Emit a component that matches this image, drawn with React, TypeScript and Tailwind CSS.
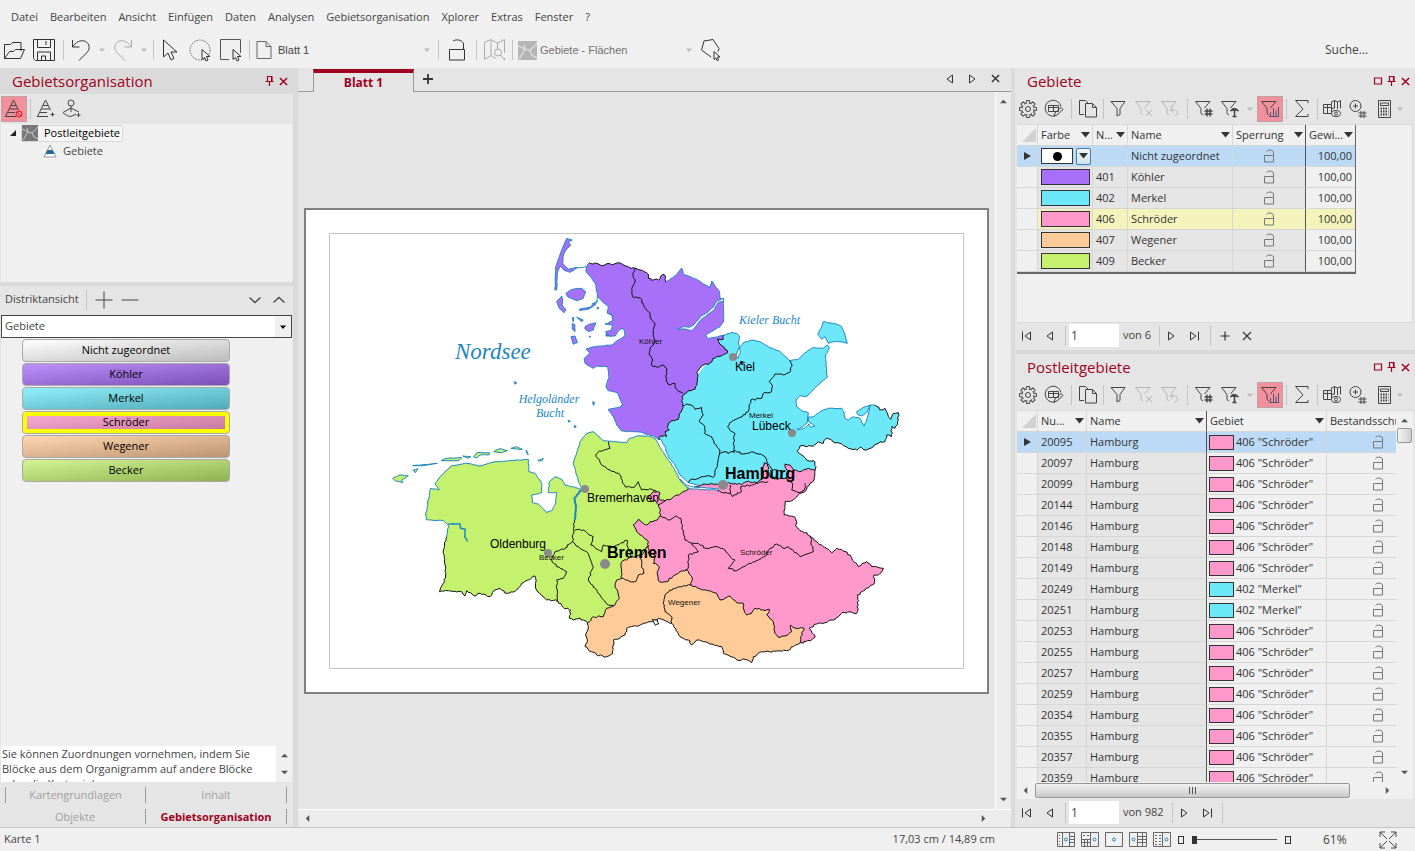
import React from "react";

type Kind = "coast" | "border" | "hidden";
type Pt = [number, number];
type Arc = [Kind, string];

const menu = ["Datei", "Bearbeiten", "Ansicht", "Einfügen", "Daten", "Analysen", "Gebietsorganisation", "Xplorer", "Extras", "Fenster", "?"];

const districts = [
  { name: "Nicht zugeordnet", cls: "bg-linear-to-br from-white to-[#bcbcbc]" },
  { name: "Köhler", cls: "bg-linear-to-br from-[#bd90fa] to-[#7c50b8]" },
  { name: "Merkel", cls: "bg-linear-to-br from-[#92effa] to-[#50aab8]" },
  { name: "Schröder", cls: "bg-linear-to-br from-[#ffb0d8] to-[#c0739a] outline-4 -outline-offset-5 outline-[#ffff00]" },
  { name: "Wegener", cls: "bg-linear-to-br from-[#ffd8b2] to-[#bd9470]" },
  { name: "Becker", cls: "bg-linear-to-br from-[#d3f592] to-[#90b352]" },
];

const areas = [
  { no: "", name: "Nicht zugeordnet", color: "", row: "bg-[#bcdaf5]" },
  { no: "401", name: "Köhler", color: "bg-[#a870f8]", row: "" },
  { no: "402", name: "Merkel", color: "bg-[#6ce8f8]", row: "" },
  { no: "406", name: "Schröder", color: "bg-[#ff99cc]", row: "bg-[#f3f3bb]" },
  { no: "407", name: "Wegener", color: "bg-[#ffcc99]", row: "" },
  { no: "409", name: "Becker", color: "bg-[#c4f26e]", row: "" },
];

const postcodes = [
  "20095", "20097", "20099", "20144", "20146", "20148", "20149", "20249", "20251",
  "20253", "20255", "20257", "20259", "20354", "20355", "20357", "20359",
];
const merkelCodes = ["20249", "20251"];

/* ---------- icons ---------- */

function Icon({ children, size = 20, className = "" }: { children: React.ReactNode; size?: number; className?: string }) {
  return (
    <svg width={size} height={size} viewBox={`0 0 ${size} ${size}`} fill="none" stroke="currentColor" className={`shrink-0 ${className}`} aria-hidden="true">
      {children}
    </svg>
  );
}

function Caret({ className = "text-[#bbb]", size = 7 }: { className?: string; size?: number }) {
  return (
    <svg width={size} height={size} viewBox="0 0 8 8" fill="currentColor" className={`shrink-0 ${className}`} aria-hidden="true">
      <path d="M0 2h8L4 6.5z" />
    </svg>
  );
}

function HeadCaret() {
  return (
    <svg width="9" height="6" viewBox="0 0 9 6" fill="#333" className="shrink-0" aria-hidden="true">
      <path d="M0 0h9L4.5 5.5z" />
    </svg>
  );
}

function OpenIcon() {
  return (
    <Icon size={22} className="text-[#333]">
      <path d="M1.5 19.5V5.5h6l2-2h8.500v8.500M1.500 19.500l5-7h4l2-2h9l-4 9z" />
    </Icon>
  );
}

function SaveIcon() {
  return (
    <Icon size={22} className="text-[#333]">
      <path d="M.5.5h21v21h-19l-2-2zM4.500.500v8h13v-8M4.500 21v-8h13v8M8.500 21v-4h4v4M13 2v4" />
    </Icon>
  );
}

function UndoIcon({ flip = false }: { flip?: boolean }) {
  return (
    <Icon size={22} className={flip ? "-scale-x-100 text-[#aaa]" : "text-[#333]"}>
      <path d="M1.500 1v7h7M2 7.500C6 1 13 .5 16 3.500s3 7-.5 10.500L8 21.500" />
    </Icon>
  );
}

function CursorIcon() {
  return (
    <Icon size={22} className="text-[#333]">
      <path d="M4.500 1v17l4.500-4 3 7 3-1.500-3-6.500h6z" />
    </Icon>
  );
}

function SmallCursor() {
  return <path d="M13 10.500v10l2.500-2 1.500 3.500 2-1-1.500-3.500h3.500z" fill="#f0f0f0" stroke="#333" />;
}

function CircleSelectIcon() {
  return (
    <Icon size={23}>
      <circle cx="11" cy="11" r="10" stroke="#555" strokeDasharray="1.500 1.200" />
      <SmallCursor />
    </Icon>
  );
}

function RectSelectIcon() {
  return (
    <Icon size={23}>
      <path d="M9 20.500H.5V.5h20V14" stroke="#555" />
      <SmallCursor />
    </Icon>
  );
}

function PageIcon() {
  return (
    <Icon size={18} className="text-[#666]">
      <path d="M2 .5h9l5 5v12H2zM11 .5v5h5" />
    </Icon>
  );
}

function LockIcon({ small = false }: { small?: boolean }) {
  if (small) {
    return (
      <Icon size={14} className="mx-auto block text-[#777]">
        <path d="M2.500 6.500h9v6.500h-9zM4.500 2.500c1-2 6-2 7 .500v3.500" />
      </Icon>
    );
  }
  return (
    <Icon size={22} className="text-[#333]">
      <path d="M3.500 10.500h15v10.500h-15zM7 2c3-2 9.500-1.500 10.500 3v5" />
    </Icon>
  );
}

function MapSearchIcon() {
  return (
    <Icon size={22} className="text-[#aaa]">
      <path d="M.5 20V3.500l6-3 7 3.500 7-3.500V14M.5 20.500l6.500-4 5 3M7 .5v16M13.500 4v6M20.500 19v2" />
      <circle cx="14" cy="13.500" r="3.500" />
      <path d="m16.500 16 4 5" />
    </Icon>
  );
}

function RegionIcon({ size = 16, faint = false }: { size?: number; faint?: boolean }) {
  return (
    <svg width={size} height={size} viewBox="0 0 16 16" className="shrink-0" aria-hidden="true">
      <rect width="16" height="16" fill={faint ? "#b5b5b5" : "#777"} />
      <path d="m0 4 6 3 4 1 6-6M6 7 1 15M10 8l2 4 4 2M6 7 5 3" stroke={faint ? "#e2e2e2" : "#ccc"} fill="none" />
    </svg>
  );
}

function PolygonIcon() {
  return (
    <Icon size={22} className="text-[#333]">
      <path d="m4 2 9-1.500 6 9-1 3M11 18l-9.500-7L4 2" />
      <path d="M14 12.500v8l2-1.500 1 2.500 1.500-.5-1-3h2.500z" />
    </Icon>
  );
}

function PyramidIcon({ blocked = false }: { blocked?: boolean }) {
  return (
    <Icon className="text-[#444]">
      <path d="M1.500 17.500 9.500 1l5 10M7 6.500h5M5.500 10h8M4 13.500h7M1 17.500h11" />
      {blocked ? (
        <g stroke="#e01020">
          <circle cx="15" cy="15" r="3" />
          <path d="m13 13 4 4" />
        </g>
      ) : (
        <path d="M16.500 13.500v4M14.500 15.500h4" />
      )}
    </Icon>
  );
}

function AnchorIcon() {
  return (
    <Icon className="text-[#444]">
      <circle cx="9" cy="4" r="3" />
      <path d="M9 7v6M9 9l-8 4.500c3 3 6 4 8 4l5-2.500M9 9l8 4M16.500 14v4M14.500 16h4" />
    </Icon>
  );
}

function GearIcon() {
  const teeth = Array.from({ length: 8 }, (_, i) => i * 45);
  return (
    <Icon>
      <circle cx="10" cy="10" r="2.500" />
      <circle cx="10" cy="10" r="6" strokeDasharray="2.700 2" />
      {teeth.map((a) => (
        <path key={a} d="M8 4.200 8.500 1.500h3l.5 2.700" transform={`rotate(${a} 10 10)`} />
      ))}
    </Icon>
  );
}

function TableEditIcon() {
  return (
    <Icon>
      <path d="M17 7.500A8 8 0 1 0 11 17M4.500 6.500h10v6h-10zM4.500 8.500h10M9.500 6.500v6" />
      <path d="m10 17 1-3 6-5.500 2 2-6 5.500z" />
    </Icon>
  );
}

function CopyIcon() {
  return (
    <Icon>
      <path d="M6 15.500H1.500V1.500h6l3 3M7.500 4.500h7l4 4v9.500h-11zM14.500 4.500v4h4" />
    </Icon>
  );
}

function FilterIcon({ kind = "" }: { kind?: string }) {
  return (
    <Icon>
      {kind === "" ? (
        <path d="M3 2.500h14L12 9.500v6l-3 1.500V9.500z" />
      ) : (
        <path d="M16 2.500H1.500L7 9.500v5l2 1.500M16 2.500 10.500 9" />
      )}
      {kind === "x" && <path d="m12 11 6 6M18 11l-6 6" />}
      {kind === "undo" && <path d="m13 8.500-2.500 2.500 2.500 2.500M10.500 11h4c4 0 4 5.500 0 6" />}
      {kind === "grid" && <path d="M10.500 12h8M10.500 15h8M13 9.500v8M16 9.500v8" strokeWidth="1.400" />}
      {kind === "one" && (
        <>
          <path d="M10.500 12c1-3.500 6.500-3.500 8 0-2-1-6-1-8 0z" fill="currentColor" />
          <path d="M14.500 11v7M12.500 17.500h4" strokeWidth="1.500" />
        </>
      )}
      {kind === "chart" && <path d="M10.500 17.500V13M13.500 17.500V9M16 17.500v-6M18.500 17.500V8M9 17.500h10" stroke="#4a5a78" />}
    </Icon>
  );
}

function SigmaIcon() {
  return (
    <Icon>
      <path d="M16 4V1.500H3.500L11 10l-7.500 7.500H16V15" />
    </Icon>
  );
}

function MapTableIcon() {
  return (
    <Icon>
      <path d="M1.500 5.500h8v9h-8zM1.500 8.500h8M5.500 5.500v9M9.500 5V3l3-1.500 3 1.500 3-1.500v8M12.500 1.500v8M15.500 3v7M9.500 10l3-1.500" />
      <ellipse cx="14" cy="14.500" rx="4.500" ry="3" fill="#e5e5e5" />
      <circle cx="14" cy="14.500" r="1.500" />
    </Icon>
  );
}

function GlobeGridIcon() {
  return (
    <Icon>
      <circle cx="7.500" cy="7" r="5.500" />
      <path d="M7.500 4.500v5M5 7h5M10.500 14h8M10.500 17h8M13 12v7M16 12v7" />
    </Icon>
  );
}

function CalcIcon() {
  return (
    <Icon>
      <path d="M4.500 1.500h12v17h-12zM6.500 4h8v2.500h-8z" />
      <path d="M6.500 9.500h8M6.500 12.500h8M6.500 15.500h8" strokeWidth="1.800" strokeDasharray="1.500 1" />
    </Icon>
  );
}

function PinIcon() {
  return (
    <Icon size={10}>
      <path d="M2.500 5.500v-5h4.500v5M6.500.500v5M.500 5.500h8M4.500 6v4" strokeWidth="1.200" />
    </Icon>
  );
}

function CrossIcon({ size = 9 }: { size?: number }) {
  return (
    <svg width={size} height={size} viewBox="0 0 10 10" stroke="currentColor" strokeWidth="1.600" aria-hidden="true">
      <path d="m1 1 8 8M9 1 1 9" />
    </svg>
  );
}

function SquareIcon() {
  return (
    <Icon size={10}>
      <path d="M1.500 2h7v6h-7z" strokeWidth="1.200" />
    </Icon>
  );
}

function StepIcon({ dir, bar = false }: { dir: "left" | "right"; bar?: boolean }) {
  return (
    <Icon size={12} className={dir === "right" ? "-scale-x-100" : ""}>
      <path d="M9.500 2v8L4 6z" />
      {bar && <path d="M1.500 1.500v9" />}
    </Icon>
  );
}

function Arrow({ rotate = "" }: { rotate?: string }) {
  return (
    <svg width="7" height="7" viewBox="0 0 8 8" fill="#555" className={rotate} aria-hidden="true">
      <path d="M0 6h8L4 2z" />
    </svg>
  );
}

/* ---------- map ---------- */

function points(ox: number, oy: number, text: string): Pt[] {
  return text.split(" ").map((p) => {
    const [x, y] = p.split(",").map(Number);
    return [ox + x / 3, oy + y / 3];
  });
}

function noise(x: number, y: number) {
  const n = Math.sin(x * 12.9898 + y * 78.233) * 43758.5453;
  return (n - Math.floor(n)) * 2 - 1;
}

// Breaks a straight run into small steps so that borders look surveyed.
function roughen(list: Pt[], amount: number): Pt[] {
  const out: Pt[] = [list[0]];
  for (let i = 1; i < list.length; i++) {
    const [x0, y0] = list[i - 1];
    const [x1, y1] = list[i];
    const len = Math.hypot(x1 - x0, y1 - y0);
    const steps = Math.max(1, Math.round(len / 2.2));
    for (let s = 1; s < steps; s++) {
      const x = x0 + ((x1 - x0) * s) / steps;
      const y = y0 + ((y1 - y0) * s) / steps;
      out.push([x + noise(x, y) * amount, y + noise(y, x) * amount]);
    }
    out.push([x1, y1]);
  }
  return out;
}

const toPath = (list: Pt[]) => "M" + list.map(([x, y]) => `${x.toFixed(1)} ${y.toFixed(1)}`).join("L");
const rough = { coast: 0.35, border: 0.9, hidden: 0 };
const COAST = "#1c86c0";

function Area({ tile, fill, arcs }: { tile: Pt; fill: string; arcs: Arc[] }) {
  const lines = arcs.map(([kind, text]) => ({ kind, list: roughen(points(tile[0], tile[1], text), rough[kind]) }));
  return (
    <g>
      <path d={toPath(lines.flatMap((l) => l.list)) + "Z"} fill={fill} />
      {lines.map((l, i) =>
        l.kind === "hidden" ? null : (
          <path key={i} d={toPath(l.list)} fill="none" stroke={l.kind === "coast" ? COAST : "#111"} strokeWidth={1} />
        ),
      )}
    </g>
  );
}

function Lines({ tile, items, color = "#111", fill = "none", width = 1 }: { tile: Pt; items: string[]; color?: string; fill?: string; width?: number }) {
  const amount = color === "#111" ? 0.9 : 0.3;
  return (
    <g fill={fill} stroke={color} strokeWidth={width}>
      {items.map((t) => (
        <path key={t} d={toPath(roughen(points(tile[0], tile[1], t), amount)) + (fill === "none" ? "" : "Z")} />
      ))}
    </g>
  );
}

const NW: Pt = [540, 230];
const NE: Pt = [640, 300];
const SW: Pt = [380, 420];
const SE: Pt = [570, 440];

const merkel: Arc[] = [
  ["coast", "252,106 275,97 290,100 298,108 295,130 300,142 310,128 335,120 360,125 385,140 420,155 450,182 475,178 500,155 520,143 550,145 562,135 568,142 562,158 556,165 562,232 530,258 500,290 480,287 468,300 470,320 485,332 505,338 503,352 520,350 540,335 565,325 605,325 612,335 615,355 625,360 640,350 660,355 672,378 680,360 685,345 690,315 705,315"],
  ["border", "705,315 725,330 735,325 745,350 752,358 760,340 775,338 775,360 765,385 755,380 755,410 740,405 735,425 720,425 700,440 680,450 660,442 650,450 625,445 600,430 585,428 560,415 550,430 535,425 520,438 480,438 472,455 485,465 500,480 520,482 528,500 525,510"],
  ["hidden", "525,510 500,530 440,545 380,550 300,560 240,565 200,565"],
  ["coast", "200,562 180,558 145,548 120,525 105,495 85,470 75,440 60,415"],
  ["hidden", "60,415 110,300 200,190 235,160 230,120 252,106"],
];

const koehler: Arc[] = [
  ["border", "148,98 160,102 170,100 185,107 200,101 215,104 230,99 245,101 262,109 275,115 288,115 300,120 312,125 322,130 325,145 335,151 350,147 356,150 362,139 372,133 376,145 378,157"],
  ["coast", "378,157 392,146 410,134 425,114 430,134 445,138 470,148 490,162 510,172 515,153 525,168 537,182 540,205 550,208 551,275 540,290 520,302 497,315 505,326 525,322 552,316"],
  ["border", "552,316 550,328 533,326 540,343 553,352 563,368 550,374 530,380 510,398 485,408 470,428 472,445 465,478 445,482 430,495 425,512 428,525 424,545 418,552 415,568 400,572 385,580 382,592 388,600 375,605 380,620 360,618 358,630"],
  ["coast", "358,630 345,620 300,606 245,603 230,585 220,560 205,538 240,532 248,525 232,488 205,482 198,470 207,440 203,410 170,408 160,415 135,400 133,385 150,368 138,357 160,350 215,345 235,330 255,318 250,295 240,298 225,318 200,318 197,305 215,300 218,285 195,282 218,272 215,255 202,250 205,230 190,218 172,198 168,165 155,145 138,125 140,110 148,98"],
];

const schroeder: Arc[] = [
  ["border", "355,148 380,140 395,135 425,130 445,133 475,128 515,134 530,125 560,128 580,112 578,90 583,68 592,72 595,95 600,112 625,118 650,112 655,100 645,72 660,75 672,90 690,95 715,85 735,90 732,120 720,130 705,155 690,160 670,180 645,185 643,225 675,232 680,262 720,288 760,320 785,338 800,325 825,335 840,345 865,380 890,365 905,380 940,385 925,405 912,405 912,432 885,450 862,465 865,495 860,520 840,515 815,520 790,540 765,548 740,552 718,565 735,592 722,602 692,608"],
  ["hidden", "692,608 670,600 600,600 500,540 400,480 300,440 250,430 230,350 220,300 180,260 200,225 255,230 250,190 300,160 355,148"],
];

const wegener: Arc[] = [
  ["border", "235,318 235,340 255,345 250,370 268,380 262,395 268,425 290,425 315,405 330,395 350,390 365,410 363,435 400,450 425,455 440,460 450,480 465,475 480,468 500,488 520,490 522,510 530,525 545,520 555,505 585,512 598,508 590,525 610,545 615,580 625,592 645,588 665,575 662,555 680,565 702,565 692,590 692,608 670,620 650,632 575,635 550,650 545,668 525,658 500,660 460,640 455,620 420,612 400,605 380,600 365,615 355,600 330,590 305,550 265,535 255,540 245,545 170,565 165,585 130,600 128,640 110,650 80,645 45,620 52,600 48,580 55,560 52,548"],
  ["hidden", "52,548 45,520 100,490 130,480 120,430 140,400 150,355 200,330 235,318"],
];

const becker: Arc[] = [
  ["coast", "205,315 190,302 140,300 137,285 145,240 152,205 178,210 165,190 180,170 215,137 260,130 300,138 345,125 445,118 447,155 465,160 485,190 485,218 455,225 457,248 475,252 500,278 515,272 527,250 530,218 505,218 508,185 525,170 545,178 555,195 605,208 595,185 580,130 600,65 620,40 640,35 670,62 740,68 745,58 770,48 805,48 825,55 838,78 855,105 880,142 900,180 925,208"],
  ["border", "925,208 895,225 855,243 835,255 842,285 832,300 810,305 800,315 775,298 760,315 770,335 805,365 805,378 785,405 755,410 725,425 725,475 710,480 705,495 718,535 695,560 680,565 670,590 640,590 622,608 600,594 580,600 568,595 572,570 550,562 530,540 500,540 470,510 465,468 425,490 410,510 380,520 360,505 345,510 330,530 300,520 285,528 260,512 255,528 245,515 205,512 178,515 190,490 198,460 190,400 200,350"],
  ["coast", "200,350 205,315"],
];

const cities: [string, number, number, number, number, number, number][] = [
  ["Kiel", 733, 357, 4, 735, 371, 12],
  ["Lübeck", 792, 433, 4, 752, 430, 12],
  ["Bremerhaven", 585, 489, 4, 587, 502, 12],
  ["Oldenburg", 548, 553, 4, 490, 548, 12],
  ["Hamburg", 723, 485, 5, 725, 479, 16],
  ["Bremen", 605, 564, 5, 607, 558, 16],
];

const areaLabels: [string, number, number][] = [
  ["Köhler", 639, 344],
  ["Merkel", 749, 418],
  ["Schröder", 740, 555],
  ["Wegener", 668, 605],
  ["Becker", 539, 560],
];

function TerritoryMap() {
  return (
    <svg viewBox="306 210 681 482" className="block w-full" role="img" aria-label="Karte 1">
      <rect x="329.5" y="233.5" width="634" height="435" fill="none" stroke="#888" strokeDasharray="1 1" />
      <Area tile={NE} fill="#6ce8f8" arcs={merkel} />
      <Lines tile={NE} color={COAST} fill="#6ce8f8" items={["550,65 590,72 605,80 615,105 622,130 600,125 580,125 565,130 555,110 545,118 533,103 545,80", "655,345 650,335 665,325 690,315 682,335 665,348"]} />
      <Lines
        tile={NE}
        items={[
          "125,315 155,315 165,328 185,322 190,345 178,365 195,380 193,400 215,410 222,430 240,450 238,465 232,500 222,530 190,530 150,540 145,548",
          "240,460 255,455 265,462 285,452 310,462 335,455 355,462 375,470 383,490 400,510 425,515",
          "283,460 282,410 285,400 262,380 275,365 300,352 325,335 332,300 365,295 370,280 395,275 398,258 388,245 405,222 430,225 448,218 455,200 450,182",
        ]}
      />
      <Lines tile={NE} color={COAST} fill="#fff" items={["297,142 301,158 294,175 289,168 294,150", "503,352 508,368 525,378 512,382 507,372 490,386 472,388 488,380 502,368"]} />
      <Lines tile={NE} fill="#a870f8" items={["302,184 310,186 308,194 303,192"]} />

      <Area tile={NW} fill="#a870f8" arcs={koehler} />
      <Lines tile={NW} items={["288,115 278,130 285,155 275,175 277,200 300,203 312,230 330,250 335,270 345,285 340,310 345,335 330,355 328,375 338,390 335,405 350,412 370,405 380,415 378,450 390,465 405,460 412,480 430,490"]} />
      <Lines tile={NW} color={COAST} fill="#fff" items={["551,205 530,214 520,232 500,248 480,262 462,284 448,292 430,290 412,298 435,297 455,302 470,286 484,268 505,252 524,237 534,218 551,212"]} />
      <Lines
        tile={NW}
        color={COAST}
        fill="#a870f8"
        items={[
          "80,25 97,30 85,35 92,45 78,60 70,75 68,100 85,118 110,112 103,120 90,127 75,122 60,108 52,130 50,180 45,180 47,110 65,60",
          "95,178 125,175 137,185 130,205 110,212 85,202 78,190",
          "65,198 50,215 58,235 72,248 78,240 66,225 68,210",
          "118,238 150,232 172,212 165,225 145,238 120,242",
          "96,265 102,262 100,275",
          "97,280 105,285 105,305 97,298",
          "135,290 150,282 167,278 160,300 145,305 135,297",
          "110,262 130,270 125,275",
          "93,320 105,318 112,338 100,343",
          "170,234 176,232 174,238",
          "197,317 200,310 210,318",
          "148,318 152,320 149,322",
          "158,515 164,518 160,526",
          "84,571 91,573 87,577",
          "103,586 109,590 104,593",
          "-78,455 -70,458 -74,463",
        ]}
      />
      <Lines tile={NW} color={COAST} items={["108,115 140,110", "172,198 172,215 155,222", "205,250 218,256"]} />

      <Area tile={SE} fill="#ff99cc" arcs={schroeder} />
      <Lines
        tile={SE}
        items={[
          "270,228 300,240 320,228 332,235 345,300 365,310 385,335 355,345 355,385 345,390",
          "365,308 385,310 410,325 440,320 465,330 480,350 495,360 475,385 500,392 530,375 565,360 590,345 600,325 620,312 645,325 655,320 690,350 730,335 720,288",
          "440,150 455,158 480,160 488,170 515,155 512,140 545,135 565,130 595,125",
          "480,135 482,160",
          "645,115 668,130 665,150 690,158 703,150 705,130",
        ]}
      />
      <Lines tile={SE} color={COAST} fill="#fff" items={["330,118 350,136 370,141 405,143 445,147 445,150 405,149 366,147 345,140"]} />

      <Area tile={SE} fill="#ffcc99" arcs={wegener} />
      <Lines tile={SE} items={["363,435 330,440 310,445 285,465 280,490 285,515 305,530 305,550", "155,415 180,425 200,422 205,405 222,400 215,370 208,345"]} />
      <Lines tile={SE} fill="#fff" items={["247,538 262,540 266,552 256,556"]} />

      <Area tile={SW} fill="#c4f26e" arcs={becker} />
      <Lines
        tile={SW}
        items={[
          "685,65 690,85 655,95 648,110 665,135 690,150 720,165 735,200 765,200 775,185 785,210 815,208 840,225",
          "583,300 578,365 600,385 620,395 640,440 625,480 650,510 660,525 685,555 700,555",
          "585,330 610,330 640,350 632,375 665,395 670,375 700,380 740,360 745,385 755,410",
          "578,365 555,385 525,395 515,420 530,440 560,455 550,475 530,480 530,545",
        ]}
      />
      <Lines tile={SW} fill="#ff99cc" items={["805,230 820,215 840,218 838,238 855,243 835,254 825,240 815,246"]} />
      <Lines tile={SW} color={COAST} width={2} items={["603,210 583,235 588,260 584,300"]} />
      <Lines tile={SW} color={COAST} width={1.5} items={["205,312 240,312 242,325 256,328 254,350 263,364"]} />
      <Lines
        tile={SW}
        color={COAST}
        fill="#c4f26e"
        items={[
          "38,175 60,165 85,168 65,180 68,188 45,182",
          "100,150 114,146 106,158",
          "98,137 172,130 130,137",
          "183,122 200,115 245,113 235,122",
          "248,108 272,110 265,115",
          "281,110 290,98 328,98 328,104 300,105 290,114",
          "341,95 360,86 382,92 365,98",
          "393,85 410,80 427,88 410,87",
          "438,90 445,105 440,98",
          "473,122 490,115 485,123",
        ]}
      />

      {cities.map(([name, cx, cy, r, x, y, size]) => (
        <g key={name} fontFamily="Liberation Sans, sans-serif">
          <circle cx={cx} cy={cy} r={r} fill="#8a8a8a" />
          <text x={x} y={y} fontSize={size} fontWeight={size > 12 ? 700 : 400}>{name}</text>
        </g>
      ))}
      <g fontFamily="Liberation Sans, sans-serif" fontSize="8" fill="#111">
        {areaLabels.map(([name, x, y]) => (
          <text key={name} x={x} y={y}>{name}</text>
        ))}
      </g>
      <g fontFamily="Liberation Serif, serif" fontStyle="italic" fill={COAST}>
        <text x="455" y="359" fontSize="23">Nordsee</text>
        <text x="739" y="324" fontSize="12">Kieler Bucht</text>
        <text x="549" y="403" fontSize="12" textAnchor="middle">Helgoländer</text>
        <text x="550" y="417" fontSize="12" textAnchor="middle">Bucht</text>
      </g>
    </svg>
  );
}

/* ---------- shared pieces ---------- */

function Sep({ className = "w-2" }: { className?: string }) {
  return (
    <span className={`flex shrink-0 justify-center ${className}`}>
      <span className="h-5 w-px bg-[#c4c4c4]" />
    </span>
  );
}

function Tool({ label, className = "", children }: { label: string; className?: string; children: React.ReactNode }) {
  return (
    <button type="button" aria-label={label} className={`flex h-[26px] w-[26px] shrink-0 items-center justify-center ${className}`}>
      {children}
    </button>
  );
}

function PanelTitle({ title, square = false, className = "" }: { title: string; square?: boolean; className?: string }) {
  return (
    <div className={`flex h-[26px] shrink-0 items-center pl-3 ${className}`}>
      <h2 className="grow text-[15px] text-[#a00020]">{title}</h2>
      <div className="flex items-center gap-1 pr-[5px] text-[#a00020]">
        {square && <button type="button" aria-label="Maximieren"><SquareIcon /></button>}
        <button type="button" aria-label="Anheften"><PinIcon /></button>
        <button type="button" aria-label="Schließen"><CrossIcon /></button>
      </div>
    </div>
  );
}

function GridToolbar() {
  return (
    <div className="flex h-[30px] shrink-0 items-center text-[#444]">
      <Tool label="Einstellungen"><GearIcon /></Tool>
      <Tool label="Tabelle bearbeiten"><TableEditIcon /></Tool>
      <Sep />
      <Tool label="Kopieren"><CopyIcon /></Tool>
      <Sep className="w-1" />
      <Tool label="Filter"><FilterIcon /></Tool>
      <Tool label="Filter löschen" className="text-[#b5b5b5]"><FilterIcon kind="x" /></Tool>
      <Tool label="Filter zurück" className="text-[#b5b5b5]"><FilterIcon kind="undo" /></Tool>
      <Sep />
      <Tool label="Filter Tabelle"><FilterIcon kind="grid" /></Tool>
      <Tool label="Filter Auswahl"><FilterIcon kind="one" /></Tool>
      <span className="flex w-3.5 justify-center"><Caret size={6} /></span>
      <Tool label="Filter Diagramm" className="border border-[#c0a0a4] bg-[#f2919c]"><FilterIcon kind="chart" /></Tool>
      <Sep className="w-1.5" />
      <Tool label="Summe"><SigmaIcon /></Tool>
      <Sep className="w-1" />
      <Tool label="Karte"><MapTableIcon /></Tool>
      <Tool label="Zoom auf Auswahl"><GlobeGridIcon /></Tool>
      <Tool label="Rechner"><CalcIcon /></Tool>
      <Caret size={6} />
    </div>
  );
}

function Pager({ total, id, editable = false }: { total: string; id: string; editable?: boolean }) {
  return (
    <div className="flex h-[27px] shrink-0 items-center pb-0.5 text-[#333]">
      <button type="button" aria-label="Erster" className="pl-1.5"><StepIcon dir="left" bar /></button>
      <button type="button" aria-label="Zurück" className="pr-1.5 pl-2.5"><StepIcon dir="left" /></button>
      <Sep />
      <input id={id} defaultValue="1" aria-label="Datensatz" className="h-[23px] w-[50px] bg-white pl-0.5 text-[12px] text-[#444]" />
      <label htmlFor={id} className="pr-2 pl-1 text-[11px] text-[#444]">{total}</label>
      <Sep className="w-px" />
      <button type="button" aria-label="Weiter" className="px-1.5"><StepIcon dir="right" /></button>
      <button type="button" aria-label="Letzter" className="pl-1"><StepIcon dir="right" bar /></button>
      <Sep className="w-5" />
      {editable && (
        <>
          <button type="button" aria-label="Hinzufügen">
            <Icon size={10}><path d="M5 .5v9M.5 5h9" strokeWidth="1.200" /></Icon>
          </button>
          <button type="button" aria-label="Entfernen" className="pl-3">
            <Icon size={10}><path d="m1 1 8 8M9 1 1 9" strokeWidth="1.100" /></Icon>
          </button>
        </>
      )}
    </div>
  );
}

function Th({ children, className = "" }: { children: string; className?: string }) {
  return (
    <th scope="col" className={`h-[21px] border-r border-b border-[#d6d6d6] bg-[#f0f0f0] p-0 font-normal ${className}`}>
      <div className="flex items-center justify-between overflow-hidden pr-0.5 pl-[3px] whitespace-nowrap">
        <span>{children}</span>
        <HeadCaret />
      </div>
    </th>
  );
}

function RowHead({ current = false }: { current?: boolean }) {
  return (
    <td className={`border-r border-b border-[#d6d6d6] p-0 ${current ? "" : "bg-[#f0f0f0]"}`}>
      {current && (
        <svg width="8" height="8" viewBox="0 0 8 8" fill="#333" className="mx-auto block" aria-hidden="true">
          <path d="M1 0v8l7-4z" />
        </svg>
      )}
    </td>
  );
}

function CornerCell() {
  return (
    <th className="h-[21px] border-r border-b border-[#d6d6d6] bg-[#f0f0f0] p-0" aria-label="Alle auswählen">
      <svg width="14" height="14" viewBox="0 0 14 14" fill="#d0d0d0" className="mr-px ml-auto block" aria-hidden="true">
        <path d="M14 0v14H0z" />
      </svg>
    </th>
  );
}

const cell = "h-[21px] border-r border-b border-[#d6d6d6] px-[3px] py-0";

/* ---------- panels ---------- */

function MainToolbar() {
  return (
    <div className="flex h-9 items-center pl-[3px] text-[11px] text-[#444]">
      <button type="button" aria-label="Öffnen"><OpenIcon /></button>
      <button type="button" aria-label="Speichern" className="ml-2"><SaveIcon /></button>
      <Sep className="w-4" />
      <button type="button" aria-label="Rückgängig"><UndoIcon /></button>
      <span className="px-1.5"><Caret size={6} /></span>
      <button type="button" aria-label="Wiederholen"><UndoIcon flip /></button>
      <span className="pr-1 pl-2"><Caret size={6} /></span>
      <Sep className="w-1" />
      <button type="button" aria-label="Auswahl" className="ml-1"><CursorIcon /></button>
      <button type="button" aria-label="Kreisauswahl" className="ml-2"><CircleSelectIcon /></button>
      <button type="button" aria-label="Rechteckauswahl" className="ml-2"><RectSelectIcon /></button>
      <Sep className="w-3" />
      <label className="flex items-center">
        <PageIcon />
        <select className="ml-[5px] w-[146px] appearance-none bg-transparent font-['Liberation_Sans',sans-serif]" aria-label="Blatt">
          <option>Blatt 1</option>
        </select>
        <Caret size={6} />
      </label>
      <Sep className="w-4" />
      <button type="button" aria-label="Sperren"><LockIcon /></button>
      <Sep className="w-4" />
      <button type="button" aria-label="Karte suchen"><MapSearchIcon /></button>
      <Sep className="w-3" />
      <label className="flex items-center text-[#707070]">
        <RegionIcon size={19} faint />
        <select className="ml-[3px] w-[146px] appearance-none bg-transparent font-['Liberation_Sans',sans-serif]" aria-label="Ebene">
          <option>Gebiete - Flächen</option>
        </select>
        <Caret size={6} />
      </label>
      <button type="button" aria-label="Fläche auswählen" className="ml-2"><PolygonIcon /></button>
      <input type="search" aria-label="Suche" placeholder="Suche..." className="ml-auto w-[90px] bg-transparent text-[12px] placeholder:text-[#444]" />
    </div>
  );
}

function OrganisationPanel() {
  return (
    <section className="flex w-[293px] shrink-0 flex-col bg-[#e5e5e5]">
      <PanelTitle title="Gebietsorganisation" className="bg-[#dadada]" />
      <div className="flex h-[30px] shrink-0 items-center pl-px">
        <Tool label="Zuordnung sperren" className="border border-[#c0a0a4] bg-[#f2919c]"><PyramidIcon blocked /></Tool>
        <Sep className="w-1.5" />
        <Tool label="Ebene hinzufügen"><PyramidIcon /></Tool>
        <Tool label="Standort hinzufügen"><AnchorIcon /></Tool>
      </div>
      <ul className="mx-px h-[158px] shrink-0 bg-[#f0f0f0] text-[11px]">
        <li className="flex h-[18px] items-center gap-1 pl-2">
          <svg width="8" height="8" viewBox="0 0 8 8" fill="#222" aria-hidden="true"><path d="M7 1v6H1z" /></svg>
          <span className="flex h-[17px] items-center gap-1.5 rounded-xs border border-[#d8d8d8] bg-[#f6f6f6] pr-0.5 text-black">
            <RegionIcon />
            Postleitgebiete
          </span>
        </li>
        <li className="flex h-[18px] items-center gap-1.5 pl-[42px] text-[#444]">
          <svg width="14" height="14" viewBox="0 0 14 14" fill="none" stroke="#999" aria-hidden="true">
            <path d="M7 1 1 13h12z" fill="#fff" />
            <path d="M4.500 6h5l2 4h-9z" fill="#1c6a9c" stroke="none" />
          </svg>
          Gebiete
        </li>
      </ul>
      <div className="h-1 shrink-0 bg-[#dadada]" />
      <div className="flex h-[29px] shrink-0 items-center pr-2 pb-0.5 pl-[5px] text-[11px] text-[#444]">
        <span>Distriktansicht</span>
        <Sep className="w-4" />
        <button type="button" aria-label="Hinzufügen"><Icon size={18}><path d="M9 .5v17M.5 9h17" /></Icon></button>
        <button type="button" aria-label="Entfernen" className="ml-2 grow"><Icon size={18}><path d="M.5 9h17" /></Icon></button>
        <button type="button" aria-label="Nach unten"><Icon size={12}><path d="m.5 3.500 5.500 5 5.500-5" strokeWidth="1.300" /></Icon></button>
        <button type="button" aria-label="Nach oben" className="ml-3"><Icon size={12}><path d="m.5 8.500 5.500-5 5.500 5" strokeWidth="1.300" /></Icon></button>
      </div>
      <label className="mx-px flex h-[23px] shrink-0 items-stretch border border-[#444] bg-white text-[11px] text-[#444]">
        <select aria-label="Ebene" className="grow appearance-none pl-[3px]">
          <option>Gebiete</option>
        </select>
        <span className="flex w-4 items-center justify-center bg-[#f0f0f0]"><Caret size={6} className="text-black" /></span>
      </label>
      <div className="mx-px flex min-h-0 grow flex-col gap-px bg-[#f0f0f0] pt-px pr-[62px] pl-[21px]">
        {districts.map((d) => (
          <button key={d.name} type="button" className={`h-[23px] shrink-0 rounded-[4px] border border-[#a8a8a8] text-[11px] text-black ${d.cls}`}>
            {d.name}
          </button>
        ))}
      </div>
      <div className="mx-px flex h-9 shrink-0">
        <p className="grow overflow-hidden bg-white pl-px text-[11px] leading-[15px] text-[#444]">
          Sie können Zuordnungen vornehmen, indem Sie Blöcke aus dem Organigramm auf andere Blöcke oder die Karte ziehen.
        </p>
        <div className="flex w-4 shrink-0 flex-col items-center justify-between bg-[#f0f0f0] py-1.5">
          <Arrow />
          <Arrow rotate="rotate-180" />
        </div>
      </div>
      <nav className="grid h-[45px] shrink-0 grid-cols-2 pt-0.5 pr-1.5 pl-[5px] text-center text-[11px] text-[#a0a0a0]">
        {["Kartengrundlagen", "Inhalt", "Objekte", "Gebietsorganisation"].map((t, i) => (
          <a
            key={t}
            href="#"
            className={`my-[3px] flex items-center justify-center border-[#999] leading-none ${i === 0 ? "border-x" : "border-r"} ${i === 3 ? "font-bold text-[#a00020]" : ""}`}
          >
            {t}
          </a>
        ))}
      </nav>
    </section>
  );
}

function Canvas() {
  return (
    <main className="flex min-w-0 grow flex-col bg-[#e5e5e5]">
      <div className="flex h-6 shrink-0 items-stretch">
        <span className="w-[15px] border-b border-[#999]" />
        <button type="button" className="mt-px w-[101px] border-x border-t-4 border-x-[#999] border-t-[#a00020] text-[12px] font-bold text-[#a00020]">
          Blatt 1
        </button>
        <div className="flex grow items-center border-b border-[#999] pb-0.5 pl-2 text-[#333]">
          <button type="button" aria-label="Neues Blatt" className="grow">
            <Icon size={12}><path d="M6 1v10M1 6h10" strokeWidth="1.800" /></Icon>
          </button>
          <div className="flex items-center gap-3 pr-[11px]">
            <button type="button" aria-label="Vorheriges Blatt"><StepIcon dir="left" /></button>
            <button type="button" aria-label="Nächstes Blatt"><StepIcon dir="right" /></button>
            <button type="button" aria-label="Blatt schließen"><CrossIcon size={9} /></button>
          </div>
        </div>
      </div>
      <div className="flex min-h-0 grow">
        <div className="flex min-w-0 grow items-center justify-center px-1.5">
          <div className="w-full max-w-[1000px] border-2 border-[#808080] bg-white">
            <TerritoryMap />
          </div>
        </div>
        <div className="flex w-4 shrink-0 flex-col items-center justify-between border-l border-white bg-[#ececec] py-1.5">
          <Arrow />
          <Arrow rotate="rotate-180" />
        </div>
      </div>
      <div className="flex h-[18px] shrink-0 items-center justify-between border-t border-white bg-[#ececec] pr-6 pl-1.5">
        <Arrow rotate="-rotate-90" />
        <Arrow rotate="rotate-90" />
      </div>
    </main>
  );
}

function AreasPanel() {
  return (
    <section className="flex h-[282px] shrink-0 flex-col bg-[#e5e5e5]">
      <PanelTitle title="Gebiete" square />
      <GridToolbar />
      <div className="mx-0.5 grow border border-l-0 border-[#dadada] bg-[#f0f0f0]">
        <table className="w-[339px] table-fixed border-separate border-spacing-0 border-r border-b-2 border-[#666] bg-[#e5e5e5] text-left text-[11px] text-[#333]">
          <colgroup>
            <col className="w-[21px]" /><col className="w-[55px]" /><col className="w-[35px]" /><col className="w-[105px]" /><col className="w-[73px]" /><col />
          </colgroup>
          <thead>
            <tr>
              <CornerCell />
              <Th>Farbe</Th>
              <Th>N...</Th>
              <Th>Name</Th>
              <Th className="border-r-[#555]">Sperrung</Th>
              <Th className="border-r-0">Gewi...</Th>
            </tr>
          </thead>
          <tbody>
            {areas.map((a) => (
              <tr key={a.name} className={a.row}>
                <RowHead current={!a.no} />
                <td className="h-[21px] border-r border-b border-[#d6d6d6] py-0 pr-0.5 pl-[3px]">
                  {a.color ? (
                    <div className={`h-4 border border-[#333] ${a.color}`} />
                  ) : (
                    <div className="flex items-center gap-[3px]">
                      <span className="flex h-4 w-8 shrink-0 items-center justify-center border border-[#333] bg-white">
                        <span className="h-[9px] w-[9px] rounded-full bg-black" />
                      </span>
                      <button type="button" aria-label="Farbe wählen" className="flex h-[17px] w-[15px] shrink-0 items-center justify-center rounded-xs border border-[#3c7fb1] bg-linear-to-b from-[#f4f4f4] to-[#d0e4ee]">
                        <HeadCaret />
                      </button>
                    </div>
                  )}
                </td>
                <td className={cell}>{a.no}</td>
                <td className={cell}>{a.name}</td>
                <td className={`${cell} border-r-[#555]`}><LockIcon small /></td>
                <td className={`h-[21px] border-b border-[#d6d6d6] py-0 pr-[3px] text-right ${a.row ? "" : "bg-[#f0f0f0]"}`}>100,00</td>
              </tr>
            ))}
          </tbody>
        </table>
      </div>
      <Pager id="area-page" total="von 6" editable />
    </section>
  );
}

function PostcodePanel() {
  return (
    <section className="flex min-h-0 grow flex-col bg-[#e5e5e5]">
      <PanelTitle title="Postleitgebiete" square />
      <GridToolbar />
      <div className="mx-0.5 flex min-h-0 grow border-t border-[#dadada]">
        <div className="min-w-0 grow overflow-hidden">
          <table className="w-full table-fixed border-separate border-spacing-0 bg-[#e5e5e5] text-left text-[11px] text-[#333]">
            <colgroup>
              <col className="w-[21px]" /><col className="w-[49px]" /><col className="w-[120px]" /><col className="w-[120px]" /><col />
            </colgroup>
            <thead>
              <tr>
                <CornerCell />
                <Th>Nu...</Th>
                <Th className="border-r-[#555]">Name</Th>
                <Th>Gebiet</Th>
                <th scope="col" className="border-b border-[#d6d6d6] bg-[#f0f0f0] p-0 font-normal">
                  <div className="overflow-hidden pl-[3px] whitespace-nowrap">Bestandsschutz</div>
                </th>
              </tr>
            </thead>
            <tbody>
              {postcodes.map((code, i) => {
                const merkelRow = merkelCodes.includes(code);
                const light = i ? "bg-[#f0f0f0]" : "";
                return (
                  <tr key={code} className={i ? "" : "bg-[#bcdaf5]"}>
                    <RowHead current={i === 0} />
                    <td className={cell}>{code}</td>
                    <td className={`${cell} border-r-[#555]`}>Hamburg</td>
                    <td className={`h-[21px] border-r border-b border-[#d6d6d6] px-0.5 py-0 ${light}`}>
                      <div className="flex items-center gap-0.5 leading-4 whitespace-nowrap">
                        <span className={`h-[15px] w-[25px] shrink-0 border border-[#333] ${merkelRow ? "bg-[#6ce8f8]" : "bg-[#ff99cc]"}`} />
                        {merkelRow ? '402 "Merkel"' : '406 "Schröder"'}
                      </div>
                    </td>
                    <td className={`border-b border-[#d6d6d6] py-0 pl-8 ${light}`}><LockIcon small /></td>
                  </tr>
                );
              })}
            </tbody>
          </table>
        </div>
        <div className="flex w-[17px] shrink-0 flex-col items-center bg-[#f0f0f0] py-1.5">
          <Arrow />
          <span className="mt-1 h-[15px] w-[15px] shrink-0 rounded-xs border border-[#979797] bg-linear-to-r from-[#f4f4f4] to-[#cfcfcf]" />
          <span className="grow" />
          <Arrow rotate="rotate-180" />
        </div>
      </div>
      <div className="mx-0.5 mb-px flex h-[17px] shrink-0 items-center bg-[#f0f0f0] pr-[22px] pl-[5px]">
        <Arrow rotate="-rotate-90" />
        <span className="ml-1.5 flex h-[15px] w-[315px] items-center justify-center gap-0.5 rounded-xs border border-[#979797] bg-linear-to-b from-[#f2f2f2] to-[#c9c9c9]">
          <i className="h-[7px] w-px bg-[#555]" /><i className="h-[7px] w-px bg-[#555]" /><i className="h-[7px] w-px bg-[#555]" />
        </span>
        <span className="grow" />
        <Arrow rotate="rotate-90" />
      </div>
      <Pager id="postcode-page" total="von 982" />
    </section>
  );
}

function LayoutIcon({ lines, mark }: { lines: string; mark: number }) {
  return (
    <svg width="18" height="15" viewBox="0 0 18 15" fill="none" stroke="#666" aria-hidden="true">
      <path d="M.5.500h17v14H.5z" />
      <path d={lines} />
      <circle cx={mark} cy="7.500" r="1.500" stroke="#1c86c0" />
    </svg>
  );
}

function StatusBar() {
  const layouts: [string, string, number][] = [
    ["Links und rechts", "M5.500 0v15M12.500 0v15M12 4.500h5M12 7.500h5M12 10.500h5M2.500 3v1M2.500 6v1M2.500 9v1M2.500 12v1", 9],
    ["Links geteilt", "M9.500 0v15M0 7.500h9M2 3.500h2M6 3.500h2M3.500 8v6M6.500 8v6M0 10.500h9", 13.5],
    ["Nur Karte", "", 9],
    ["Rechts", "M8.500 0v15M13.500 0v15M9 4.500h8M9 7.500h8M9 10.500h8", 4.5],
    ["Links", "M9.500 0v15M2 3.500h2M6 3.500h2M2 6.500h2M6 6.500h2M2 9.500h2M6 9.500h2M2 12.500h2M6 12.500h2", 13.5],
  ];
  return (
    <footer className="flex h-6 shrink-0 items-center border-t border-[#c4c4c4] pr-[18px] pl-1 text-[11px] text-[#444]">
      <span className="grow">Karte 1</span>
      <span className="pr-[62px]">17,03 cm / 14,89 cm</span>
      <div className="flex gap-1.5">
        {layouts.map(([label, lines, mark]) => (
          <button key={label} type="button" aria-label={label}><LayoutIcon lines={lines} mark={mark} /></button>
        ))}
      </div>
      <button type="button" aria-label="Verkleinern" className="ml-[7px] h-2 w-1.5 border border-[#333]" />
      <input
        type="range"
        aria-label="Zoom"
        min={0}
        max={100}
        defaultValue={0}
        className="mx-2 h-3 w-[85px] appearance-none bg-[linear-gradient(#555,#555)] bg-[length:100%_1px] bg-center bg-no-repeat [&::-webkit-slider-thumb]:h-2 [&::-webkit-slider-thumb]:w-[5px] [&::-webkit-slider-thumb]:appearance-none [&::-webkit-slider-thumb]:bg-[#333]"
      />
      <button type="button" aria-label="Vergrößern" className="h-2 w-1.5 border border-[#333]" />
      <span className="w-[88px] pl-8 text-[12px]">61%</span>
      <button type="button" aria-label="Vollbild">
        <Icon size={18}><path d="M1 1l7 7M17 1l-7 7M1 17l7-7M17 17l-7-7M1 6V1h5M12 1h5v5M1 12v5h5M12 17h5v-5" /></Icon>
      </button>
    </footer>
  );
}

export default function App() {
  return (
    <div className="flex h-screen min-h-[700px] flex-col overflow-hidden bg-[#f0f0f0] font-['Open_Sans','Noto_Sans',sans-serif]">
      <header className="flex h-[68px] shrink-0 flex-col">
        <nav className="flex h-8 items-center gap-3 pt-0.5 pl-[11px] text-[11px] text-[#444]">
          {menu.map((m) => (
            <a key={m} href="#">{m}</a>
          ))}
        </nav>
        <MainToolbar />
      </header>
      <div className="flex min-h-0 grow">
        <OrganisationPanel />
        <div className="w-[5px] shrink-0 bg-[#dadada]" />
        <Canvas />
        <div className="w-1 shrink-0 bg-[#dadada]" />
        <div className="flex w-[400px] shrink-0 flex-col">
          <AreasPanel />
          <div className="h-1 shrink-0 bg-[#dadada]" />
          <PostcodePanel />
        </div>
      </div>
      <StatusBar />
    </div>
  );
}
